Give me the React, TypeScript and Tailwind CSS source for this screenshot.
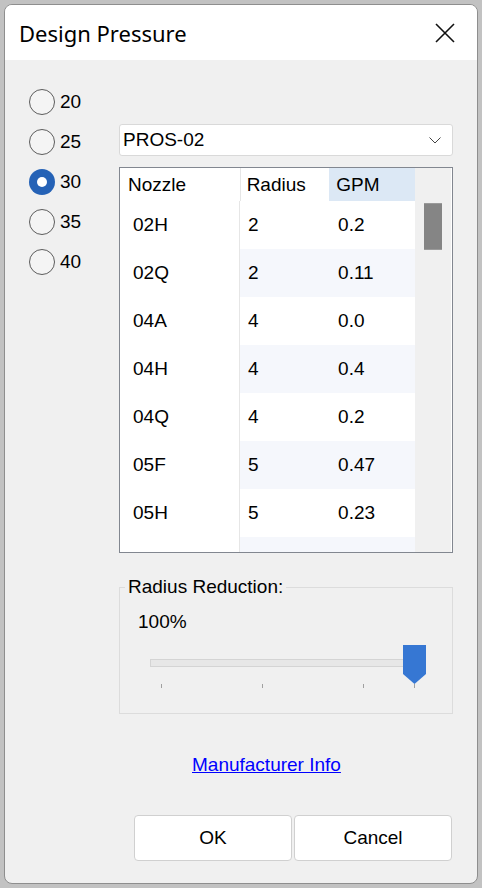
import React from "react";

const rows = [
  { nozzle: "02H", radius: "2", gpm: "0.2" },
  { nozzle: "02Q", radius: "2", gpm: "0.11" },
  { nozzle: "04A", radius: "4", gpm: "0.0" },
  { nozzle: "04H", radius: "4", gpm: "0.4" },
  { nozzle: "04Q", radius: "4", gpm: "0.2" },
  { nozzle: "05F", radius: "5", gpm: "0.47" },
  { nozzle: "05H", radius: "5", gpm: "0.23" },
  { nozzle: "", radius: "", gpm: "" },
];

const pressures = ["20", "25", "30", "35", "40"];

function Radio({ label, checked }: { label: string; checked?: boolean }) {
  return (
    <div className="flex h-[40px] items-center gap-[5px]">
      {checked ? (
        <span className="flex h-[26px] w-[26px] items-center justify-center rounded-full bg-[#2562b6]">
          <span className="h-[10px] w-[10px] rounded-full bg-white" />
        </span>
      ) : (
        <span className="h-[26px] w-[26px] rounded-full border-[1.5px] border-[#5c5c5c] bg-[#f4f4f4]" />
      )}
      <span className="text-[19px] leading-[22px] text-black">{label}</span>
    </div>
  );
}

export default function App() {
  return (
    <div className="h-[888px] w-[482px] bg-[#c2c2c2] p-[4px] font-['Liberation_Sans',Arial,sans-serif]">
      <div className="flex h-[880px] w-[474px] flex-col overflow-hidden rounded-[8px] border border-[#8e8e8e] bg-[#f0f0f0]">
        {/* title bar */}
        <div className="flex h-[55px] shrink-0 items-center justify-between bg-white pl-[14px] pr-[22px]">
          <span className="font-['Noto_Sans','Open_Sans',sans-serif] text-[22px] leading-[28px] text-black">Design Pressure</span>
          <svg width="20" height="20" viewBox="0 0 20 20">
            <path d="M1 1 L19 19 M19 1 L1 19" stroke="#111" strokeWidth="1.6" />
          </svg>
        </div>

        {/* body */}
        <div className="flex flex-1 pl-[24px]">
          <div className="w-[90px] pt-[22px]">
            {pressures.map((p) => (
              <Radio key={p} label={p} checked={p === "30"} />
            ))}
          </div>

          <div className="w-[334px] pt-[64px]">
            {/* dropdown */}
            <div className="flex h-[32px] items-center justify-between rounded-[3px] border border-[#d9d9d9] bg-white pl-[3px] pr-[11px]">
              <span className="text-[19px] leading-[22px] text-black">PROS-02</span>
              <svg width="12" height="7" viewBox="0 0 12 7">
                <path d="M0.5 0.5 L6 6 L11.5 0.5" fill="none" stroke="#444" strokeWidth="1" />
              </svg>
            </div>

            {/* list */}
            <div className="mt-[11px] flex h-[386px] overflow-hidden border border-[#828790] bg-white">
              <div className="w-[296px] overflow-hidden">
                <div className="flex h-[33px] items-center text-[19px] leading-[22px] text-black">
                  <div className="flex h-full w-[121px] items-center border-r border-[#e6e6e6] pl-[8px]">Nozzle</div>
                  <div className="w-[89px] pl-[6px]">Radius</div>
                  <div className="flex h-full w-[86px] items-center bg-[#dce8f5] pl-[7px]">GPM</div>
                </div>
                {rows.map((r, i) => (
                  <div key={i} className="flex h-[48px] text-[19px] leading-[22px] text-black">
                    <div className="flex w-[121px] items-center border-r border-[#e6e6e6] bg-white pl-[13px]">{r.nozzle}</div>
                    <div className={`flex w-[175px] items-center ${i % 2 === 1 ? "bg-[#f5f7fc]" : "bg-white"}`}>
                      <div className="w-[89px] pl-[8px]">{r.radius}</div>
                      <div className="w-[86px] pl-[9px]">{r.gpm}</div>
                    </div>
                  </div>
                ))}
              </div>
              <div className="w-[37px] border-r border-white bg-[#f0f0f0] pl-[9px] pt-[35px]">
                <div className="h-[47px] w-[18px] border-y border-[#9a9a9a] bg-[#858585]" />
              </div>
            </div>

            {/* group box */}
            <div className="relative mt-[34px] h-[127px] border border-[#dcdcdc]">
              <span className="absolute left-[5px] top-[-12px] bg-[#f0f0f0] px-[3px] text-[19px] leading-[22px] text-black">
                Radius Reduction:
              </span>
              <div className="pl-[18px] pt-[23px] text-[19px] leading-[22px] text-black">100%</div>
              <div className="relative ml-[30px] mt-[12px] h-[45px] w-[276px]">
                <div className="absolute left-0 top-[14px] h-[8px] w-[268px] border border-[#d4d4d4] bg-[#e7e7e7]" />
                <svg className="absolute left-[253px] top-0" width="23" height="39" viewBox="0 0 23 39">
                  <polygon points="0,0 23,0 23,29 11.5,39 0,29" fill="#3677d3" />
                </svg>
                <span className="absolute left-[11px] top-[39px] h-[4px] w-px bg-[#a0a0a0]" />
                <span className="absolute left-[112px] top-[39px] h-[4px] w-px bg-[#a0a0a0]" />
                <span className="absolute left-[213px] top-[39px] h-[4px] w-px bg-[#a0a0a0]" />
                <span className="absolute left-[264px] top-[39px] h-[4px] w-px bg-[#a0a0a0]" />
              </div>
            </div>

            {/* link */}
            <div className="ml-[73px] mt-[40px] text-[19px] leading-[22px]">
              <span className="text-[#0000ff] underline">Manufacturer Info</span>
            </div>

            {/* buttons */}
            <div className="ml-[15px] mt-[39px] flex gap-[2px]">
              <button className="h-[46px] w-[158px] rounded-[4px] border border-[#d0d0d0] bg-white text-[19px] text-black">
                OK
              </button>
              <button className="h-[46px] w-[158px] rounded-[4px] border border-[#d0d0d0] bg-white text-[19px] text-black">
                Cancel
              </button>
            </div>
          </div>
        </div>
      </div>
    </div>
  );
}
